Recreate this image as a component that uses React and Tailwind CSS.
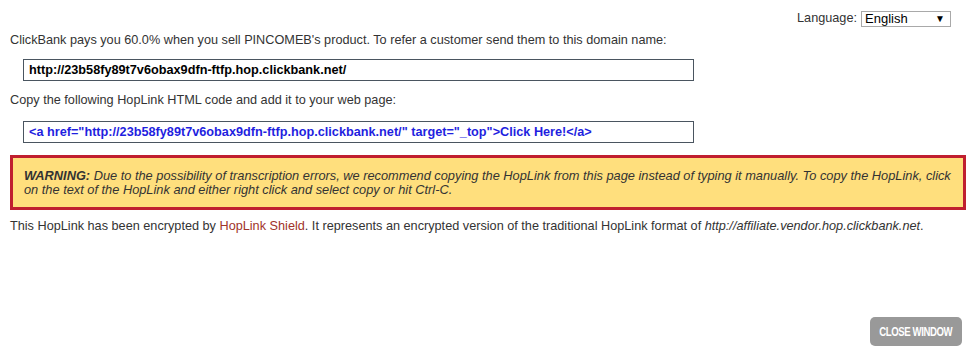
import React from "react";

function App() {
  return (
    <div
      className="relative h-[354px] w-[975px] bg-white text-[12.7px] text-[#333]"
      style={{ fontFamily: '"Liberation Sans", Arial, sans-serif' }}
    >
      {/* Language picker */}
      <div className="flex justify-end items-center pt-[9px] pr-[24px] gap-[4px]">
        <span className="text-[12.7px] text-[#333]">Language:</span>
        <div className="flex items-center justify-between w-[90px] h-[16px] border border-[#a9a9a9] pl-[3px] pr-[5px] text-[13px] text-black">
          <span>English</span>
          <span className="text-[10px]">▼</span>
        </div>
      </div>

      <div className="px-[10px]">
        <p className="mt-[5px] leading-[15px]">
          ClickBank pays you 60.0% when you sell PINCOMEB's product. To refer a customer send them to this domain name:
        </p>
        <div className="ml-[13px] mt-[11px] w-[671px] h-[22px] border border-[#4a5560] flex items-center px-[5px] font-bold text-black">
          http://23b58fy89t7v6obax9dfn-ftfp.hop.clickbank.net/
        </div>

        <p className="mt-[12px] leading-[15px]">
          Copy the following HopLink HTML code and add it to your web page:
        </p>
        <div className="ml-[13px] mt-[13px] w-[671px] h-[22px] border border-[#4a5560] flex items-center px-[5px] font-bold text-[#1f1fe0]">
          &lt;a href="http://23b58fy89t7v6obax9dfn-ftfp.hop.clickbank.net/" target="_top"&gt;Click Here!&lt;/a&gt;
        </div>

        <div className="mt-[12px] w-[956px] border-[3px] border-[#c01f2f] bg-[#ffdf7d] px-[11px] pt-[11px] pb-[10px] italic text-[12.8px] leading-[14px] text-[#333]">
          <b>WARNING:</b> Due to the possibility of transcription errors, we recommend copying the HopLink from this page instead of typing it manually. To copy the HopLink, click on the text of the HopLink and either right click and select copy or hit Ctrl-C.
        </div>

        <p className="mt-[9px] leading-[15px]">
          This HopLink has been encrypted by <span className="text-[#a0332a]">HopLink Shield</span>. It represents an encrypted version of the traditional HopLink format of <i>http://affiliate.vendor.hop.clickbank.net</i>.
        </p>
      </div>

      <div className="absolute right-[13px] bottom-[8px] flex items-center justify-center w-[92px] h-[29px] rounded-[5px] bg-[#999] text-white font-bold text-[12px] tracking-[-0.5px]">
        <span className="inline-block scale-x-[0.8]">CLOSE WINDOW</span>
      </div>
    </div>
  );
}

export default App;
